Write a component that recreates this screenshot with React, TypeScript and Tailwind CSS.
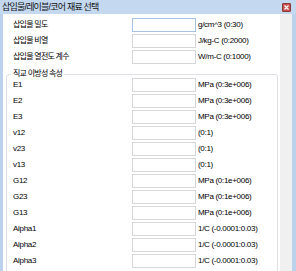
import React from 'react';

interface Field {
  label: string;
  unit: string;
  korean?: boolean;
}

const topFields: Field[] = [
  { label: '삽입물 밀도', unit: 'g/cm^3 (0:30)', korean: true },
  { label: '삽입물 비열', unit: 'J/kg-C (0:2000)', korean: true },
  { label: '삽입물 열전도 계수', unit: 'W/m-C (0:1000)', korean: true },
];

const orthoFields: Field[] = [
  { label: 'E1', unit: 'MPa (0:3e+006)' },
  { label: 'E2', unit: 'MPa (0:3e+006)' },
  { label: 'E3', unit: 'MPa (0:3e+006)' },
  { label: 'v12', unit: '(0:1)' },
  { label: 'v23', unit: '(0:1)' },
  { label: 'v13', unit: '(0:1)' },
  { label: 'G12', unit: 'MPa (0:1e+006)' },
  { label: 'G23', unit: 'MPa (0:1e+006)' },
  { label: 'G13', unit: 'MPa (0:1e+006)' },
  { label: 'Alpha1', unit: '1/C (-0.0001:0.03)' },
  { label: 'Alpha2', unit: '1/C (-0.0001:0.03)' },
  { label: 'Alpha3', unit: '1/C (-0.0001:0.03)' },
];

function FieldRow({ field, focused }: { field: Field; focused?: boolean }) {
  return (
    <div className="grid grid-cols-[119px_64px_auto] items-center h-[14px]">
      <span
        className={
          'whitespace-nowrap ' + (field.korean ? 'tracking-[-0.75px]' : 'tracking-[-0.3px]')
        }
      >
        {field.label}
      </span>
      <div
        className={
          'h-[14px] bg-white border ' + (focused ? 'border-[#a6c3e2]' : 'border-[#d6d6d6]')
        }
      />
      <span className="pl-[2px] whitespace-nowrap tracking-[-0.3px]">{field.unit}</span>
    </div>
  );
}

export default function App() {
  return (
    <div className="w-[296px] h-[271px] overflow-hidden flex flex-col bg-[#bcd2ec] text-black text-[8px] leading-[10px] font-['Liberation_Sans','Noto_Sans_CJK_KR',sans-serif]">
      {/* title bar */}
      <div className="h-[14px] shrink-0 flex items-center justify-between pl-[2px] pr-[5px] bg-[#c4d8ef]">
        <span className="text-[9px] tracking-[-0.8px] text-[#111]">삽입물/레이블/코어 재료 선택</span>
        <div className="w-[9px] h-[9px] flex items-center justify-center rounded-[1px] border border-[#8a3a3a] bg-[#c9504a]">
          <svg width="5" height="5" viewBox="0 0 5 5">
            <path d="M0.5 0.5 L4.5 4.5 M4.5 0.5 L0.5 4.5" stroke="#ffffff" strokeWidth="1.3" />
          </svg>
        </div>
      </div>

      <div className="flex flex-1 min-h-0 pl-[3px] pr-[4px]">
        {/* client area */}
        <div className="w-[277px] bg-white flex flex-col pt-[4px]">
          <div className="flex flex-col gap-[2px] pl-[10px]">
            {topFields.map((f, i) => (
              <FieldRow key={f.label} field={f} focused={i === 0} />
            ))}
          </div>

          {/* group box */}
          <div className="mt-[10px] ml-[3px] w-[272px] shrink-0 flex flex-col border border-[#dcdfe3] rounded-[3px] pl-[6px] pb-[8px]">
            <span className="-mt-[5px] -ml-[2px] self-start px-[2px] bg-white leading-[8px] tracking-[-0.75px]">
              직교 이방성 속성
            </span>
            <div className="flex flex-col gap-[2px]">
              {orthoFields.map((f) => (
                <FieldRow key={f.label} field={f} />
              ))}
            </div>
          </div>
        </div>

        {/* right strip */}
        <div className="w-[12px] bg-[#f0f0f0]" />
      </div>
    </div>
  );
}
